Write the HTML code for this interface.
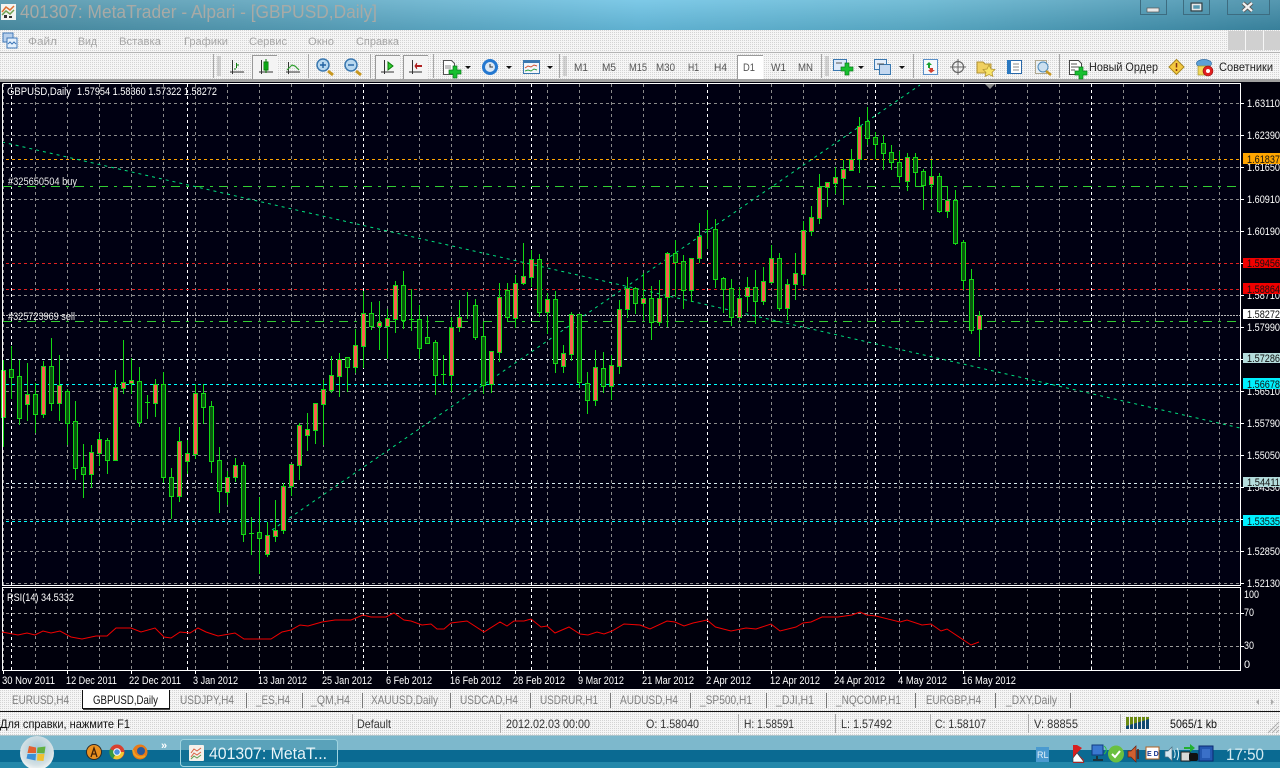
<!DOCTYPE html>
<html><head><meta charset="utf-8"><title>MetaTrader</title>
<style>
html,body{margin:0;padding:0;background:#000;width:1280px;height:768px;overflow:hidden}
svg{display:block;position:absolute;left:0;top:0}
text{font-family:"Liberation Sans",sans-serif;font-size:11px;fill:#fff}
.m{font-size:11px;fill:#a6a6a6}
.tf{font-size:11px;fill:#555}
.tab{font-size:12px;fill:#808080}
.st{font-size:12px;fill:#111}
.st2{font-size:12px;fill:#333}
.d{fill:#111}
</style></head><body>
<svg width="1280" height="768" viewBox="0 0 1280 768" xmlns="http://www.w3.org/2000/svg">
<defs>
<linearGradient id="tg" x1="0" x2="1" y1="0" y2="0"><stop offset="0" stop-color="#4f92a8"/><stop offset=".25" stop-color="#5ea6c0"/><stop offset=".5" stop-color="#6cc2e4"/><stop offset=".72" stop-color="#62b4d0"/><stop offset="1" stop-color="#3f8aa6"/></linearGradient>
<linearGradient id="tv" x1="0" x2="0" y1="0" y2="1"><stop offset="0" stop-color="#fff" stop-opacity=".12"/><stop offset="1" stop-color="#003040" stop-opacity=".12"/></linearGradient>
<pattern id="dth" width="2" height="2" patternUnits="userSpaceOnUse"><rect width="2" height="2" fill="#f6f6f6"/><rect width="1" height="1" fill="#d4d4d4"/></pattern>
<pattern id="vg" x="3" y="84" width="32" height="6" patternUnits="userSpaceOnUse"><rect width="1" height="3" fill="#8a8a8a"/></pattern>
<pattern id="hg" x="0" y="7" width="6" height="32" patternUnits="userSpaceOnUse"><rect width="3" height="1" fill="#8a8a8a"/></pattern>
<radialGradient id="orb" cx=".5" cy=".4" r=".6"><stop offset="0" stop-color="#9fc6d6"/><stop offset=".75" stop-color="#d4e0e4"/><stop offset="1" stop-color="#f4f6f6"/></radialGradient>
</defs>

<!-- title bar -->
<rect width="1280" height="30" fill="url(#tg)"/><rect width="1280" height="30" fill="url(#tv)"/>
<rect x="1" y="4" width="15" height="16" fill="#f4f4f0"/>
<path d="M2 12l4-5 4 3 4-4" fill="none" stroke="#e07030" stroke-width="1.5"/><path d="M2 15l4-4 4 3 4-4" fill="none" stroke="#70a050" stroke-width="1.5"/><path d="M4 15h3v3H4zM9 16h3v2H9z" fill="#333"/>
<text x="20" y="18" textLength="357" lengthAdjust="spacingAndGlyphs" style="font-size:18px;fill:#a8aaa6">401307: MetaTrader - Alpari - [GBPUSD,Daily]</text>
<path d="M1140.5 0v14.5h26V0M1183.5 0v14.5h26V0M1227.5 0v14.5h42V0" fill="#5b97ac" fill-opacity=".15" stroke="#3d6c80"/>
<rect x="1147" y="8" width="12" height="4" fill="#e8e8e8" stroke="#555" stroke-width=".7"/>
<rect x="1191" y="3" width="11" height="8" fill="none" stroke="#333" stroke-width="1"/><rect x="1192.5" y="4.5" width="8" height="5" fill="none" stroke="#e8e8e8" stroke-width="1.5"/>
<path d="M1243 3l9 8M1252 3l-9 8" stroke="#555" stroke-width="4"/><path d="M1243 3l9 8M1252 3l-9 8" stroke="#f0f0f0" stroke-width="2.2"/>

<!-- menu + toolbar -->
<rect y="30" width="1280" height="52" fill="url(#dth)"/>
<rect x="3" y="33" width="10" height="9" fill="#b8d0ec" stroke="#3f78b8"/><rect x="7" y="38" width="10" height="10" fill="#e4f0fc" stroke="#3f78b8"/><path d="M8 44l2-2 2 2 2-2 2 2" fill="none" stroke="#3f78b8"/>
<text class="m" x="28" y="45" textLength="29" lengthAdjust="spacingAndGlyphs">Файл</text>
<text class="m" x="78" y="45" textLength="19" lengthAdjust="spacingAndGlyphs">Вид</text>
<text class="m" x="119" y="45" textLength="42" lengthAdjust="spacingAndGlyphs">Вставка</text>
<text class="m" x="184" y="45" textLength="44" lengthAdjust="spacingAndGlyphs">Графики</text>
<text class="m" x="249" y="45" textLength="38" lengthAdjust="spacingAndGlyphs">Сервис</text>
<text class="m" x="308" y="45" textLength="26" lengthAdjust="spacingAndGlyphs">Окно</text>
<text class="m" x="356" y="45" textLength="43" lengthAdjust="spacingAndGlyphs">Справка</text>
<rect x="1228" y="31" width="17" height="19" fill="#d0d0d0"/><rect x="1246" y="31" width="17" height="19" fill="#d0d0d0"/><rect x="1264" y="31" width="16" height="19" fill="#d0d0d0"/>
<rect y="52" width="1280" height="1" fill="#b4b4b4"/>
<rect y="79" width="1280" height="3" fill="#a0a0a0"/>
<path d="M213.5 54v24M308.5 54v24M370.5 54v24M433.5 54v24M559.5 54v24M821.5 54v24M913.5 54v24M1059.5 54v24" stroke="#a8a8a8"/>
<path d="M217 57h4M217 59h4M217 61h4M217 63h4M217 65h4M217 67h4M217 69h4M217 71h4M217 73h4M217 75h4M563 57h4M563 59h4M563 61h4M563 63h4M563 65h4M563 67h4M563 69h4M563 71h4M563 73h4M563 75h4M825 57h4M825 59h4M825 61h4M825 63h4M825 65h4M825 67h4M825 69h4M825 71h4M825 73h4M825 75h4" stroke="#999" stroke-width=".8"/>
<!-- pressed boxes -->
<rect x="252" y="55" width="25" height="24" fill="#f4f4f4"/><path d="M252.5 79V55.5H277" fill="none" stroke="#999"/>
<rect x="375" y="55" width="25" height="24" fill="#f4f4f4"/><path d="M375.5 79V55.5H400" fill="none" stroke="#999"/>
<rect x="403" y="55" width="25" height="24" fill="#f4f4f4"/><path d="M403.5 79V55.5H428" fill="none" stroke="#999"/>
<rect x="737" y="55" width="26" height="24" fill="#fff"/><path d="M737.5 79V55.5H763" fill="none" stroke="#999"/>
<!-- chart type icons -->
<g fill="none" stroke="#333">
<path d="M232.5 60v14M230 72h14"/><path d="M261.5 60v14M259 72h14"/><path d="M288.5 62v12M286 72h14"/><path d="M384.5 60v14M381 72h13"/><path d="M412.5 60v14M409 72h13"/>
</g>
<path d="M236.5 68V63M236 65h3M236 69h-2" stroke="#0a7a0a" fill="none"/>
<rect x="264" y="62" width="4" height="8" fill="#10d020" stroke="#0a7a0a"/><path d="M266 59v14" stroke="#0a7a0a"/>
<path d="M287 70l5-5 3 1 4 4" fill="none" stroke="#30a030" stroke-width="1.2"/>
<path d="M388 62l5 4-5 4z" fill="#30d030" stroke="#0a7a0a"/>
<path d="M416 66h6" stroke="#b02020" stroke-width="2"/><path d="M417 63l-2 3 2 3" fill="#b02020" stroke="#b02020"/>
<!-- zooms -->
<g>
<path d="M328 71l5 4" stroke="#c89820" stroke-width="3"/><circle cx="323" cy="65" r="6" fill="#b8d8f0" stroke="#3a78b0" stroke-width="1.5"/><path d="M320 65h6M323 62v6" stroke="#2060a0" stroke-width="1.4"/>
<path d="M356 71l5 4" stroke="#c89820" stroke-width="3"/><circle cx="351" cy="65" r="6" fill="#b8d8f0" stroke="#3a78b0" stroke-width="1.5"/><path d="M348 65h6" stroke="#2060a0" stroke-width="1.4"/>
</g>
<!-- new chart -->
<path d="M443.5 60.5h8l3 3v11h-11z" fill="#fff" stroke="#555"/><path d="M445 66h6M445 68h6" stroke="#888"/>
<path d="M449 70h4v-4h4v4h4v4h-4v4h-4v-4h-4z" fill="#18c030" stroke="#0a7a1a" stroke-width=".7"/>
<path d="M465 66h6l-3 3zM506 66h6l-3 3zM547 66h6l-3 3zM858 66h6l-3 3zM899 66h6l-3 3z" fill="#111"/>
<circle cx="490" cy="67" r="8" fill="#2478d0"/><circle cx="490" cy="67" r="5" fill="#dce8f4"/><path d="M490 64v3h3" stroke="#333" fill="none"/>
<rect x="523.5" y="60.5" width="16" height="13" fill="#f4f6fa" stroke="#3a78b0"/><rect x="524" y="61" width="15" height="2" fill="#3a78b0"/><path d="M525 68l3-2 3 1 3-2 3 1" stroke="#d05030" fill="none"/><path d="M525 71l3-1 3 1 3-2 3 1" stroke="#30a040" fill="none"/>
<text class="tf" x="574" y="71" textLength="14" lengthAdjust="spacingAndGlyphs">M1</text>
<text class="tf" x="602" y="71" textLength="14" lengthAdjust="spacingAndGlyphs">M5</text>
<text class="tf" x="629" y="71" textLength="18" lengthAdjust="spacingAndGlyphs">M15</text>
<text class="tf" x="656" y="71" textLength="19" lengthAdjust="spacingAndGlyphs">M30</text>
<text class="tf" x="688" y="71" textLength="11" lengthAdjust="spacingAndGlyphs">H1</text>
<text class="tf" x="714" y="71" textLength="13" lengthAdjust="spacingAndGlyphs">H4</text>
<text class="tf" x="743" y="71" textLength="12" lengthAdjust="spacingAndGlyphs">D1</text>
<text class="tf" x="771" y="71" textLength="15" lengthAdjust="spacingAndGlyphs">W1</text>
<text class="tf" x="798" y="71" textLength="15" lengthAdjust="spacingAndGlyphs">MN</text>
<!-- indicators etc -->
<rect x="833.5" y="59.5" width="13" height="11" fill="#dce8f8" stroke="#3a78b0"/><path d="M836 63h6" stroke="#555"/>
<path d="M841 67h4v-4h4v4h4v4h-4v4h-4v-4h-4z" fill="#18c030" stroke="#0a7a1a" stroke-width=".7"/>
<rect x="874.5" y="59.5" width="12" height="10" fill="#e4eefa" stroke="#3a78b0"/><rect x="879.5" y="64.5" width="11" height="10" fill="#c4d8f0" stroke="#3a78b0"/><path d="M877 64h7" stroke="#555"/>
<rect x="923.5" y="59.5" width="14" height="15" fill="#f4f8fc" stroke="#5a90c8"/><path d="M926 65l3-3 3 3h-2v3h-2v-3z" fill="#18a030"/><path d="M929 68h4v2h2l-4 3-3-3h2z" fill="#d04030"/>
<circle cx="958" cy="67" r="5.5" fill="none" stroke="#666" stroke-width="1.2"/><path d="M958 59v16M950 67h16" stroke="#666"/>
<path d="M977 62h6l2 2h6v9h-14z" fill="#f0d060" stroke="#b09030"/><path d="M989 65l2 4 4 .5-3 3 1 4-4-2-4 2 1-4-3-3 4-.5z" fill="#f8e468" stroke="#b09030" stroke-width=".7"/>
<rect x="1007.5" y="60.5" width="14" height="13" fill="#fff" stroke="#2a68a8"/><rect x="1007" y="60" width="4" height="14" fill="#2a78c0"/><path d="M1013 64h6M1013 67h6M1013 70h6" stroke="#888"/>
<rect x="1035.5" y="60.5" width="11" height="13" fill="#eaf0f4" stroke="#b0a890"/><circle cx="1043" cy="67" r="5" fill="#cce0f0" stroke="#4a88b8"/><path d="M1046 71l5 4" stroke="#c89820" stroke-width="2.5"/>
<path d="M1069.5 60.5h9l3 3v11h-12z" fill="#fff" stroke="#444"/><path d="M1071 64h6M1071 67h8M1071 70h4" stroke="#555"/>
<path d="M1075 71h4v-4h4v4h4v4h-4v4h-4v-4h-4z" fill="#18c030" stroke="#0a7a1a" stroke-width=".7"/>
<text x="1089" y="71" textLength="69" lengthAdjust="spacingAndGlyphs" style="font-size:12px;fill:#222">Новый Ордер</text>
<path d="M1176.5 59.5l7.5 7.5-7.5 7.5-7.500-7.500z" fill="#f4c840" stroke="#a88820"/><path d="M1176.5 63v4.5M1176.5 69v2" stroke="#803010" stroke-width="1.5"/>
<ellipse cx="1204" cy="63.5" rx="7.5" ry="4" fill="#5ca0d8" stroke="#2a68a0" stroke-width=".7"/><path d="M1198 66h12v6l-4 3h-8z" fill="#f0d858" stroke="#a09030" stroke-width=".7"/><circle cx="1208" cy="71" r="5" fill="#e02020" stroke="#901010" stroke-width=".6"/><circle cx="1208" cy="71" r="2" fill="#fff"/>
<text x="1219" y="71" textLength="54" lengthAdjust="spacingAndGlyphs" style="font-size:12px;fill:#222">Советники</text>

<!-- chart area -->
<rect y="82" width="1280" height="608" fill="#00000c"/>
<rect x="3" y="84" width="1237" height="501" fill="#000012"/>
<rect x="3" y="84" width="1237" height="501" fill="url(#vg)"/>
<rect x="3" y="84" width="1237" height="501" fill="url(#hg)"/>
<rect x="3" y="589" width="1237" height="81" fill="url(#vg)"/>
<g shape-rendering="crispEdges" fill="none">
<path d="M6 613.5H1240M6 646.5H1240" stroke="#9a9a9a" stroke-dasharray="3 3"/>
<path d="M11.5 84V585M187.5 84V585M363.5 84V585M531.5 84V585M707.5 84V585M875.5 84V585M1091.5 84V585M11.5 589V670M187.5 589V670M363.5 589V670M531.5 589V670M707.5 589V670M875.5 589V670M1091.5 589V670" stroke="#fff" stroke-dasharray="3 3"/>
<path d="M6 159.5H1240" stroke="#ffa500" stroke-dasharray="3 3"/>
<path d="M6 263.5H1240M6 289.500H1240" stroke="#e02020" stroke-dasharray="3 3"/>
<path d="M6 359.5H1240M6 483.5H1240" stroke="#d8ecf0" stroke-dasharray="3 3"/>
<path d="M6 384.5H1240M6 521.5H1240" stroke="#00ffff" stroke-dasharray="3 3"/>
<path d="M3 186.5H1240M3 321.5H1240" stroke="#32cd32" stroke-dasharray="9 6 3 6"/>
<path d="M3 315.5H1240" stroke="#b8b8b8" stroke-dasharray="2 1"/>
</g>
<path d="M2 142L1240 428M272 530L920 85" fill="none" stroke="#00e080" stroke-dasharray="3 4"/>

<!-- wicks -->
<path shape-rendering="crispEdges" fill="none" stroke="#14d814" d="M3.5 360V447M11.5 346V399M19.5 360V425M27.5 363V421M35.5 383V433M43.5 361V418M51.5 338V411M59.5 355V421M67.5 389V445M75.5 401V480M83.5 444V498M91.5 445V488M99.5 433V466M107.5 438V474M115.5 370V461M123.5 340V394M131.5 358V394M139.5 367V427M147.5 395V419M155.5 379V417M163.5 372V483M171.5 468V519M179.5 427V502M187.5 440V474M195.5 384V459M203.5 384V424M211.5 401V473M219.5 447V513M227.5 471V505M235.5 458V482M243.5 462V542M251.5 517V555M259.5 497V574M267.5 522V557M275.5 500V542M283.5 483V534M291.5 464V496M299.5 423V480M307.5 413V451M315.5 403V444M323.5 380V445M331.5 356V393M339.5 353V397M347.5 357V392M355.5 329V373M363.5 291V368M371.5 302V330M379.5 301V350M387.5 309V359M395.5 281V333M403.5 271V329M411.5 289V331M419.5 305V359M427.5 316V344M435.5 340V395M443.5 355V385M451.5 317V392M459.5 300V332M467.5 292V319M475.5 299V340M483.5 322V394M491.5 351V393M499.5 283V362M507.5 283V322M515.5 275V328M523.5 243V285M531.5 250V287M539.5 254V317M547.5 293V334M555.5 291V373M563.5 345V373M571.5 312V361M579.5 314V388M587.5 372V414M595.5 350V406M603.5 352V393M611.5 355V400M619.5 300V374M627.5 277V318M635.5 287V314M643.5 273V320M651.5 286V340M659.5 280V326M667.5 252V327M675.5 240V297M683.5 255V309M691.5 258V302M699.5 223V263M707.5 210V249M715.5 219V288M723.5 277V313M731.5 279V326M739.5 287V317M747.5 277V312M755.5 270V324M763.5 267V305M771.5 245V284M779.5 253V311M787.5 279V320M795.5 253V300M803.5 221V286M811.5 206V236M819.5 174V224M827.5 182V207M835.5 167V194M843.5 160V205M851.5 149V171M859.5 117V173M867.5 107V145M875.5 132V159M883.5 135V170M891.5 145V170M899.5 151V183M907.5 153V191M915.5 153V187M923.5 169V210M931.5 160V199M939.5 173V213M947.5 186V218M955.5 190V245M963.5 240V290M971.5 269V334M979.5 311V357"/>
<!-- dojis -->
<path shape-rendering="crispEdges" fill="none" stroke="#14d814" d="M145 402.5h5M249 533.5h5M409 319.5h5M441 374.5h5M705 229.5h5"/>
<!-- bear bodies -->
<path shape-rendering="crispEdges" fill="#0a560e" stroke="#14d814" d="M9.5 369.5h4v8h-4zM17.5 376.5h4v42h-4zM33.5 394.5h4v20h-4zM49.5 366.5h4v37h-4zM65.5 391.5h4v32h-4zM73.5 421.5h4v47h-4zM81.5 467.5h4v7h-4zM105.5 440.5h4v20h-4zM137.5 381.5h4v41h-4zM161.5 384.5h4v93h-4zM169.5 477.5h4v19h-4zM201.5 393.5h4v14h-4zM209.5 406.5h4v55h-4zM217.5 460.5h4v31h-4zM241.5 465.5h4v69h-4zM257.5 532.5h4v6h-4zM345.5 357.5h4v10h-4zM369.5 313.5h4v13h-4zM401.5 285.5h4v35h-4zM417.5 319.5h4v29h-4zM425.5 337.5h4v6h-4zM433.5 342.5h4v33h-4zM473.5 305.5h4v32h-4zM481.5 336.5h4v49h-4zM505.5 290.5h4v27h-4zM537.5 259.5h4v53h-4zM553.5 299.5h4v64h-4zM577.5 314.5h4v68h-4zM585.5 383.5h4v17h-4zM601.5 368.5h4v18h-4zM633.5 288.5h4v15h-4zM649.5 298.5h4v24h-4zM673.5 253.5h4v9h-4zM681.5 261.5h4v29h-4zM713.5 229.5h4v50h-4zM721.5 278.5h4v11h-4zM729.5 288.5h4v29h-4zM753.5 287.5h4v14h-4zM777.5 258.5h4v50h-4zM865.5 121.5h4v17h-4zM873.5 137.5h4v7h-4zM881.5 143.5h4v10h-4zM889.5 152.5h4v10h-4zM897.5 162.5h4v14h-4zM913.5 157.5h4v15h-4zM921.5 171.5h4v14h-4zM937.5 176.5h4v35h-4zM953.5 200.5h4v43h-4zM961.5 242.5h4v38h-4zM969.5 279.5h4v51h-4z"/>
<!-- bull bodies -->
<path shape-rendering="crispEdges" fill="#f8604e" stroke="#14d814" d="M1.5 370.5h4v47h-4zM25.5 394.5h4v10h-4zM41.5 366.5h4v48h-4zM57.5 385.5h4v18h-4zM89.5 452.5h4v22h-4zM97.5 439.5h4v14h-4zM113.5 387.5h4v73h-4zM121.5 382.5h4v6h-4zM129.5 380.5h4v3h-4zM153.5 384.5h4v19h-4zM177.5 441.5h4v55h-4zM185.5 453.5h4v8h-4zM193.5 393.5h4v61h-4zM225.5 477.5h4v15h-4zM233.5 465.5h4v12h-4zM265.5 535.5h4v19h-4zM273.5 530.5h4v6h-4zM281.5 486.5h4v44h-4zM289.5 464.5h4v22h-4zM297.5 425.5h4v40h-4zM305.5 429.5h4v6h-4zM313.5 403.5h4v27h-4zM321.5 389.5h4v15h-4zM329.5 375.5h4v15h-4zM337.5 359.5h4v17h-4zM353.5 345.5h4v22h-4zM361.5 313.5h4v33h-4zM377.5 322.5h4v4h-4zM385.5 318.5h4v8h-4zM393.5 285.5h4v34h-4zM449.5 327.5h4v48h-4zM457.5 317.5h4v10h-4zM489.5 351.5h4v33h-4zM497.5 297.5h4v55h-4zM513.5 283.5h4v35h-4zM521.5 276.5h4v7h-4zM529.5 259.5h4v18h-4zM545.5 299.5h4v13h-4zM561.5 353.5h4v13h-4zM569.5 314.5h4v40h-4zM593.5 367.5h4v33h-4zM609.5 365.5h4v21h-4zM617.5 309.5h4v57h-4zM625.5 288.5h4v21h-4zM641.5 298.5h4v5h-4zM657.5 298.5h4v24h-4zM665.5 253.5h4v44h-4zM689.5 258.5h4v32h-4zM697.5 236.5h4v22h-4zM737.5 298.5h4v19h-4zM745.5 287.5h4v9h-4zM761.5 281.5h4v20h-4zM769.5 258.5h4v24h-4zM785.5 284.5h4v24h-4zM793.5 273.5h4v11h-4zM801.5 230.5h4v44h-4zM809.5 217.5h4v14h-4zM817.5 187.5h4v31h-4zM825.5 182.5h4v5h-4zM833.5 177.5h4v6h-4zM841.5 169.5h4v9h-4zM849.5 159.5h4v11h-4zM857.5 126.5h4v33h-4zM905.5 157.5h4v24h-4zM929.5 176.5h4v8h-4zM945.5 200.5h4v11h-4zM977.5 315.5h4v14h-4z"/>

<!-- frames -->
<path d="M2.5 84V585.5H1240.5V83M2.5 83.5H1240.5" fill="none" stroke="#fff" shape-rendering="crispEdges"/>
<path d="M2.5 587.5H1240.5V670.5H2.5z" fill="none" stroke="#fff" shape-rendering="crispEdges"/>
<path d="M985 84h10l-5 5z" fill="#888"/>
<!-- price ticks -->
<path shape-rendering="crispEdges" stroke="#fff" d="M1241 103.5h3M1241 135.5h3M1241 167.5h3M1241 199.5h3M1241 231.5h3M1241 263.5h3M1241 295.5h3M1241 327.5h3M1241 359.5h3M1241 391.5h3M1241 423.5h3M1241 455.5h3M1241 487.5h3M1241 519.5h3M1241 551.5h3M1241 583.5h3M1241 613.5h3M1241 646.5h3"/>
<!-- price labels -->
<text x="1247" y="107" textLength="33" lengthAdjust="spacingAndGlyphs">1.63110</text>
<text x="1247" y="139" textLength="33" lengthAdjust="spacingAndGlyphs">1.62390</text>
<text x="1247" y="171" textLength="33" lengthAdjust="spacingAndGlyphs">1.61650</text>
<text x="1247" y="203" textLength="33" lengthAdjust="spacingAndGlyphs">1.60910</text>
<text x="1247" y="235" textLength="33" lengthAdjust="spacingAndGlyphs">1.60190</text>
<text x="1247" y="299" textLength="33" lengthAdjust="spacingAndGlyphs">1.58710</text>
<text x="1247" y="331" textLength="33" lengthAdjust="spacingAndGlyphs">1.57990</text>
<text x="1247" y="395" textLength="33" lengthAdjust="spacingAndGlyphs">1.56510</text>
<text x="1247" y="427" textLength="33" lengthAdjust="spacingAndGlyphs">1.55790</text>
<text x="1247" y="459" textLength="33" lengthAdjust="spacingAndGlyphs">1.55050</text>
<text x="1247" y="491" textLength="33" lengthAdjust="spacingAndGlyphs">1.54330</text>
<text x="1247" y="555" textLength="33" lengthAdjust="spacingAndGlyphs">1.52850</text>
<text x="1247" y="587" textLength="33" lengthAdjust="spacingAndGlyphs">1.52130</text>
<rect x="1243" y="153" width="37" height="11" fill="#ffa500"/><text x="1247" y="163" textLength="33" lengthAdjust="spacingAndGlyphs" class="d">1.61837</text>
<rect x="1243" y="258" width="37" height="10" fill="#f00000"/><text x="1247" y="267" textLength="33" lengthAdjust="spacingAndGlyphs" class="d">1.59456</text>
<rect x="1243" y="283" width="37" height="11" fill="#f00000"/><text x="1247" y="293" textLength="33" lengthAdjust="spacingAndGlyphs" class="d">1.58864</text>
<rect x="1243" y="309" width="37" height="10" fill="#fff"/><text x="1247" y="318" textLength="33" lengthAdjust="spacingAndGlyphs" class="d">1.58272</text>
<rect x="1243" y="353" width="37" height="10" fill="#b4dcdc"/><text x="1247" y="362" textLength="33" lengthAdjust="spacingAndGlyphs" class="d">1.57286</text>
<rect x="1243" y="378" width="37" height="11" fill="#00f0ff"/><text x="1247" y="388" textLength="33" lengthAdjust="spacingAndGlyphs" class="d">1.56678</text>
<rect x="1243" y="477" width="37" height="10" fill="#b4dcdc"/><text x="1247" y="486" textLength="33" lengthAdjust="spacingAndGlyphs" class="d">1.54411</text>
<rect x="1243" y="515" width="37" height="11" fill="#00f0ff"/><text x="1247" y="525" textLength="33" lengthAdjust="spacingAndGlyphs" class="d">1.53535</text>
<text x="1244" y="598" textLength="15" lengthAdjust="spacingAndGlyphs">100</text>
<text x="1244" y="616" textLength="10" lengthAdjust="spacingAndGlyphs">70</text>
<text x="1244" y="649" textLength="10" lengthAdjust="spacingAndGlyphs">30</text>
<text x="1244" y="668">0</text>
<!-- chart text -->
<text x="7" y="95" textLength="64" lengthAdjust="spacingAndGlyphs">GBPUSD,Daily</text>
<text x="77" y="95" textLength="140" lengthAdjust="spacingAndGlyphs">1.57954 1.58360 1.57322 1.58272</text>
<text x="8" y="185" textLength="69" lengthAdjust="spacingAndGlyphs" style="fill:#e8e8e8">#325650504 buy</text>
<text x="8" y="320" textLength="67" lengthAdjust="spacingAndGlyphs" style="fill:#e8e8e8">#325723969 sell</text>
<text x="7" y="601" textLength="67" lengthAdjust="spacingAndGlyphs">RSI(14) 34.5332</text>
<!-- RSI -->
<path fill="none" stroke="#f00000" d="M2 632L18 635 27 633 35 635 43 631 51 633 60 631 71 637 82 639 96 636 107 636 116 628 131 628 141 632 155 628 164 637 171 638 180 632 190 633 198 628 206 632 218 636 235 633 244 639 271 639 282 632 291 630 300 625 308 626 322 622 335 620 351 620 363 615 371 617 386 617 394 613 404 620 411 621 422 625 431 624 437 629 444 629 451 623 467 621 484 632 500 622 507 626 514 621 524 621 531 619 541 627 547 626 555 633 569 627 580 634 588 635 597 632 604 634 612 631 624 624 640 625 650 629 667 621 675 622 684 626 693 623 707 620 715.5 627 731 631 746 628 756 629 771 624 780 631 796 627 803 623 811 622 822 617 838 617 852 615 860 612 866.5 615 876 616 900 622 907 620 922 625 931 624 941 631 947 629 971 645 979 642"/>
<!-- time ticks and labels -->
<path shape-rendering="crispEdges" stroke="#fff" d="M3.5 671v3M67.5 671v3M131.5 671v3M195.5 671v3M259.5 671v3M323.5 671v3M387.5 671v3M451.5 671v3M515.5 671v3M579.5 671v3M643.5 671v3M707.5 671v3M771.5 671v3M835.5 671v3M899.5 671v3M963.5 671v3"/>
<text x="2" y="684" textLength="53" lengthAdjust="spacingAndGlyphs">30 Nov 2011</text>
<text x="66" y="684" textLength="51" lengthAdjust="spacingAndGlyphs">12 Dec 2011</text>
<text x="129" y="684" textLength="52" lengthAdjust="spacingAndGlyphs">22 Dec 2011</text>
<text x="193" y="684" textLength="45" lengthAdjust="spacingAndGlyphs">3 Jan 2012</text>
<text x="258" y="684" textLength="49" lengthAdjust="spacingAndGlyphs">13 Jan 2012</text>
<text x="322" y="684" textLength="50" lengthAdjust="spacingAndGlyphs">25 Jan 2012</text>
<text x="386" y="684" textLength="46" lengthAdjust="spacingAndGlyphs">6 Feb 2012</text>
<text x="450" y="684" textLength="51" lengthAdjust="spacingAndGlyphs">16 Feb 2012</text>
<text x="513" y="684" textLength="52" lengthAdjust="spacingAndGlyphs">28 Feb 2012</text>
<text x="578" y="684" textLength="46" lengthAdjust="spacingAndGlyphs">9 Mar 2012</text>
<text x="642" y="684" textLength="52" lengthAdjust="spacingAndGlyphs">21 Mar 2012</text>
<text x="706" y="684" textLength="45" lengthAdjust="spacingAndGlyphs">2 Apr 2012</text>
<text x="770" y="684" textLength="50" lengthAdjust="spacingAndGlyphs">12 Apr 2012</text>
<text x="834" y="684" textLength="51" lengthAdjust="spacingAndGlyphs">24 Apr 2012</text>
<text x="898" y="684" textLength="49" lengthAdjust="spacingAndGlyphs">4 May 2012</text>
<text x="962" y="684" textLength="54" lengthAdjust="spacingAndGlyphs">16 May 2012</text>

<!-- tabs -->
<rect y="689" width="1280" height="46" fill="url(#dth)"/>
<rect y="689" width="1280" height="1" fill="#fff"/>
<path d="M82.5 690v18.5h87V690" fill="#fff" stroke="#111"/>
<path d="M83 709.5h87" stroke="#444"/>
<path d="M246.5 693v15M302.5 693v15M362.5 693v15M450.5 693v15M530.5 693v15M610.5 693v15M690.5 693v15M766.5 693v15M826.5 693v15M915.5 693v15M995.5 693v15M1070.5 693v15" stroke="#777"/>
<text class="tab" x="12" y="704" textLength="57" lengthAdjust="spacingAndGlyphs">EURUSD,H4</text>
<text x="93" y="704" textLength="65" lengthAdjust="spacingAndGlyphs" style="font-size:12px;fill:#111">GBPUSD,Daily</text>
<text class="tab" x="180" y="704" textLength="54" lengthAdjust="spacingAndGlyphs">USDJPY,H4</text>
<text class="tab" x="256" y="704" textLength="34" lengthAdjust="spacingAndGlyphs">_ES,H4</text>
<text class="tab" x="311" y="704" textLength="39" lengthAdjust="spacingAndGlyphs">_QM,H4</text>
<text class="tab" x="371" y="704" textLength="67" lengthAdjust="spacingAndGlyphs">XAUUSD,Daily</text>
<text class="tab" x="460" y="704" textLength="58" lengthAdjust="spacingAndGlyphs">USDCAD,H4</text>
<text class="tab" x="540" y="704" textLength="58" lengthAdjust="spacingAndGlyphs">USDRUR,H1</text>
<text class="tab" x="620" y="704" textLength="58" lengthAdjust="spacingAndGlyphs">AUDUSD,H4</text>
<text class="tab" x="700" y="704" textLength="52" lengthAdjust="spacingAndGlyphs">_SP500,H1</text>
<text class="tab" x="776" y="704" textLength="38" lengthAdjust="spacingAndGlyphs">_DJI,H1</text>
<text class="tab" x="836" y="704" textLength="65" lengthAdjust="spacingAndGlyphs">_NQCOMP,H1</text>
<text class="tab" x="926" y="704" textLength="55" lengthAdjust="spacingAndGlyphs">EURGBP,H4</text>
<text class="tab" x="1006" y="704" textLength="51" lengthAdjust="spacingAndGlyphs">_DXY,Daily</text>
<path d="M1259 699l-3 3 3 3zM1271 699l3 3-3 3z" fill="#aaa"/>
<!-- status bar -->
<rect y="711" width="1280" height="1" fill="#111"/>
<path d="M352.5 714v19M500.5 714v19M738.5 714v19M835.5 714v19M930.5 714v19M1028.5 714v19M1120.5 714v19" stroke="#aaa"/>
<text class="st" x="0" y="728" textLength="130" lengthAdjust="spacingAndGlyphs">Для справки, нажмите F1</text>
<text class="st2" x="357" y="728" textLength="34" lengthAdjust="spacingAndGlyphs">Default</text>
<text class="st2" x="506" y="728" textLength="84" lengthAdjust="spacingAndGlyphs">2012.02.03 00:00</text>
<text class="st2" x="646" y="728" textLength="53" lengthAdjust="spacingAndGlyphs">O: 1.58040</text>
<text class="st2" x="744" y="728" textLength="50" lengthAdjust="spacingAndGlyphs">H: 1.58591</text>
<text class="st2" x="841" y="728" textLength="51" lengthAdjust="spacingAndGlyphs">L: 1.57492</text>
<text class="st2" x="935" y="728" textLength="51" lengthAdjust="spacingAndGlyphs">C: 1.58107</text>
<text class="st2" x="1034" y="728" textLength="44" lengthAdjust="spacingAndGlyphs">V: 88855</text>
<text class="st" x="1170" y="728" textLength="47" lengthAdjust="spacingAndGlyphs">5065/1 kb</text>
<path d="M1126 717h23v3l-23 6z" fill="#6a8a10"/><path d="M1126 726l23-7v10h-23z" fill="#104a70"/><path d="M1129.5 717v12M1133.5 717v12M1137.5 717v12M1141.5 717v12M1145.5 717v12" stroke="#f0f0f0"/>
<path d="M1268 733l11-11M1272 733l7-7M1276 733l3-3" stroke="#aaa"/>

<!-- taskbar -->
<rect y="735" width="1280" height="33" fill="#74b0c6"/>
<rect y="735" width="1280" height="1" fill="#a8c4cc"/>
<rect y="736" width="1280" height="14" fill="#7db8cc"/>
<rect y="750" width="1280" height="12" fill="#0a6a92"/>
<rect y="762" width="1280" height="6" fill="#2488aa"/>
<circle cx="37" cy="753" r="17" fill="url(#orb)"/>
<path d="M29 746l7 1.5v5.5h-8.500z" fill="#e06030"/><path d="M37.5 747.5l8-1-1 7-7.500-.5z" fill="#60b040"/><path d="M27.5 754h8.5l-.5 6.5-9-2z" fill="#3a90d8"/><path d="M37.5 754h7l-1 7-6.500-.5z" fill="#f0c030"/>
<circle cx="94" cy="752" r="7.5" fill="#e89020" stroke="#2a2a2a"/><path d="M91 757l3-9 3 9M92 754h4" stroke="#402008" fill="none" stroke-width="1.3"/>
<circle cx="117" cy="752" r="7.5" fill="#d84030"/><path d="M117 752L124 752A7.5 7.5 0 0 1 113 758.5z" fill="#f0c830"/><path d="M117 752L113 758.5A7.5 7.5 0 0 1 110 749z" fill="#3a9a40"/><circle cx="117" cy="752" r="3.3" fill="#4a90e0" stroke="#fff"/>
<circle cx="140" cy="752" r="7.5" fill="#e87a18"/><circle cx="141" cy="751" r="4" fill="#2a5a9a"/><path d="M133 750c1 6 6 9 12 6" fill="none" stroke="#f0a020" stroke-width="2"/>
<text x="161" y="749" style="font-size:11px;font-weight:bold;fill:#fff">»</text>
<rect x="180.5" y="739.5" width="157" height="27" rx="3" fill="#1a7898" fill-opacity=".35" stroke="#9fd4e0"/>
<rect x="189" y="745" width="15" height="16" rx="1" fill="#f4f0ea"/><path d="M191 753l3-4 3 2 4-3M191 757l3-4 3 2 4-3" fill="none" stroke="#d86040"/><path d="M191 759l3-3 3 2 4-3" fill="none" stroke="#60a050"/>
<text x="209" y="759" textLength="118" lengthAdjust="spacingAndGlyphs" style="font-size:17px;fill:#e8f4f8">401307: MetaT...</text>
<!-- tray -->
<rect x="1036" y="747" width="13" height="15" fill="#4a9ad0"/><text x="1037" y="758" style="font-size:9px;fill:#e4f0f8">RL</text>
<path d="M1073 745h4l5 3-5 5 7 7v3h-11z" fill="#d82020"/><path d="M1077 753l7 9h-11v-4z" fill="#fff" stroke="#333" stroke-width=".6"/>
<rect x="1092" y="745" width="11" height="10" fill="#3a78d0" stroke="#103a80"/><path d="M1097 756v3M1093 760h10" stroke="#222" stroke-width="1.5"/><path d="M1104 746c3 2 3 6 0 8" stroke="#30c040" fill="none"/>
<ellipse cx="1116" cy="754" rx="8" ry="8.5" fill="#6ac040"/><path d="M1112 754l3 3 5-6" stroke="#fff" stroke-width="2" fill="none"/>
<path d="M1128 751h3l5-5v16l-5-5h-3z" fill="#d06030" stroke="#702010" stroke-width=".7"/><path d="M1138 749v10" stroke="#601808" stroke-width="1.5"/>
<rect x="1146" y="747" width="13" height="12" fill="#fff" stroke="#b06020"/><text x="1147" y="756" style="font-size:7px;font-weight:bold;fill:#1a3a90">E D</text>
<path d="M1165 751h3l4-4v14l-4-4h-3z" fill="#d8e8f0" stroke="#507080" stroke-width=".7"/><path d="M1174 750c1.5 2 1.5 6 0 8M1177 748c2 3 2 9 0 12" stroke="#e0f4f8" fill="none"/>
<rect x="1181" y="752" width="9" height="9" fill="#d8d8d8" stroke="#222"/><rect x="1189" y="753" width="9" height="8" rx="2" fill="#111"/><path d="M1184 747h6v-3l5 4-5 4v-3h-6z" fill="#20b030"/>
<rect x="1199" y="746" width="14" height="15" fill="#2458b0" stroke="#0c2a70"/><rect x="1202" y="749" width="8" height="9" fill="#3a70c8"/>
<text x="1226" y="760" textLength="38" lengthAdjust="spacingAndGlyphs" style="font-size:17px;fill:#d4eaf0">17:50</text>
</svg>
</body></html>
